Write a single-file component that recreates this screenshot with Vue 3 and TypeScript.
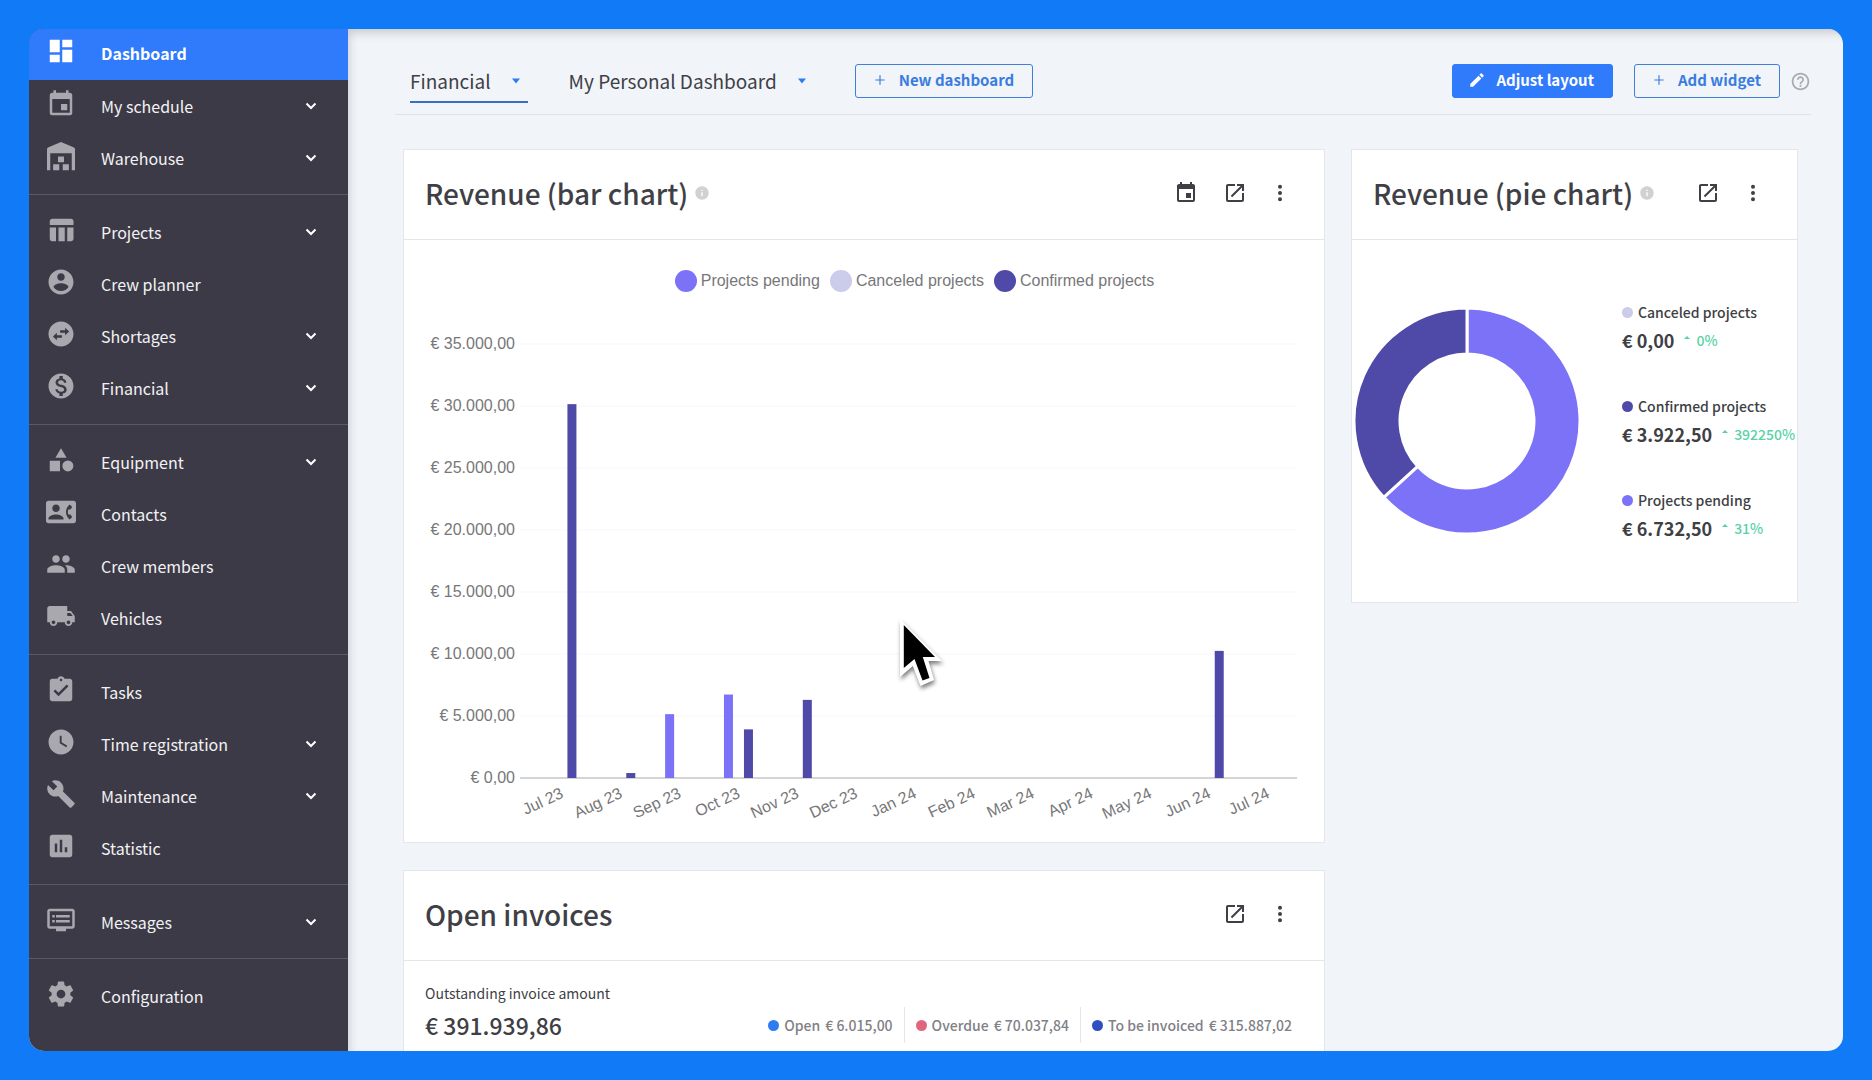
<script setup lang="ts">
interface NavItem {
  label: string
  icon: string
  expandable?: boolean
  active?: boolean
}

const icons: Record<string, string> = {
  dashboard: 'M13 3v6h8V3zM13 21h8V11h-8zM3 21h8v-6H3zM3 13h8V3H3z',
  calendar:
    'M19 19H5V8h14M16 1v2H8V1H6v2H5c-1.11 0-2 .89-2 2v14a2 2 0 0 0 2 2h14a2 2 0 0 0 2-2V5c0-1.11-.9-2-2-2h-1V1M17 12h-5v5h5z',
  warehouse:
    'M12 .8L1.600 5.200Q.8 5.600.8 6.500V23.300H3.400V9.800H20.600V23.300H23.200V6.500Q23.200 5.600 22.400 5.200zM10 12.300h4q.4 0 .4.4v3.900q0 .4-.4.4h-4q-.4 0-.4-.4v-3.900q0-.4.4-.4zM5.700 18.500h4.900v4.800H5.700zM13.400 18.500h4.900v4.800h-4.900z',
  projects:
    'M10 10h5v11h-5zM17 21h3c1.1 0 2-.9 2-2v-9h-5v11zm3-18H5c-1.100 0-2 .9-2 2v3h19V5c0-1.100-.9-2-2-2zM3 19c0 1.100.9 2 2 2h3V10H3v9z',
  person:
    'M12 2C6.480 2 2 6.480 2 12s4.480 10 10 10 10-4.480 10-10S17.520 2 12 2zm0 3c1.660 0 3 1.340 3 3s-1.340 3-3 3-3-1.340-3-3 1.340-3 3-3zm0 14.200c-2.500 0-4.710-1.280-6-3.220.03-1.990 4-3.080 6-3.080 1.990 0 5.970 1.090 6 3.080-1.290 1.940-3.500 3.220-6 3.220z',
  swap:
    'M22 12c0-5.520-4.480-10-10-10S2 6.480 2 12s4.480 10 10 10 10-4.480 10-10zM18.500 10l-3.200 3v-2h-4V9h4V7zM5.500 14l3.200-3v2h4v2h-4v2z',
  money:
    'M12 2C6.480 2 2 6.480 2 12s4.480 10 10 10 10-4.480 10-10S17.520 2 12 2zm1.410 16.090V20h-2.670v-1.930c-1.710-.36-3.160-1.460-3.270-3.400h1.960c.1 1.050.82 1.870 2.650 1.870 1.960 0 2.400-.98 2.400-1.590 0-.83-.44-1.610-2.670-2.140-2.480-.6-4.180-1.620-4.180-3.670 0-1.720 1.390-2.840 3.110-3.210V4h2.670v1.950c1.860.45 2.790 1.860 2.850 3.390H14.300c-.05-1.110-.64-1.870-2.220-1.870-1.500 0-2.400.68-2.400 1.640 0 .84.65 1.390 2.670 1.910s4.180 1.390 4.180 3.910c-.01 1.830-1.380 2.830-3.120 3.160z',
  shapes:
    'M12 2.500L7.500 10.200h9zM3 12.500h8.200v8.500H3zM17.500 12.300a4.400 4.400 0 1 0 0 8.800 4.400 4.400 0 1 0 0-8.800z',
  contact:
    'M22 3H2C.9 3 0 3.900 0 5v14c0 1.100.9 2 2 2h20c1.100 0 1.990-.9 1.990-2L24 5c0-1.100-.9-2-2-2zM8 6c1.660 0 3 1.340 3 3s-1.340 3-3 3-3-1.340-3-3 1.340-3 3-3zm6 12H2v-1c0-2 4-3.100 6-3.100s6 1.100 6 3.100v1zm3.850-4h1.640L21 16l-1.990 1.990c-1.310-.98-2.280-2.380-2.730-3.990-.18-.64-.28-1.310-.28-2s.1-1.360.28-2c.45-1.620 1.420-3.010 2.730-3.990L21 8l-1.510 2h-1.640c-.22.63-.35 1.300-.35 2s.13 1.370.35 2z',
  group:
    'M16 11c1.660 0 2.990-1.340 2.990-3S17.660 5 16 5s-3 1.340-3 3 1.340 3 3 3zm-8 0c1.660 0 2.990-1.340 2.990-3S9.660 5 8 5 5 6.340 5 8s1.340 3 3 3zm0 2c-2.330 0-7 1.170-7 3.500V19h14v-2.500c0-2.330-4.670-3.500-7-3.500zm8 0c-.29 0-.62.02-.97.05 1.160.84 1.970 1.970 1.970 3.450V19h6v-2.500c0-2.330-4.670-3.500-7-3.500z',
  truck:
    'M20 8h-3V4H3c-1.100 0-2 .9-2 2v11h2c0 1.660 1.340 3 3 3s3-1.340 3-3h6c0 1.660 1.340 3 3 3s3-1.340 3-3h2v-5l-3-4zM6 18.500c-.83 0-1.500-.67-1.500-1.500s.67-1.500 1.500-1.500 1.500.67 1.500 1.500-.67 1.500-1.500 1.500zm13.500-9l1.960 2.500H17V9.500h2.500zm-1.500 9c-.83 0-1.500-.67-1.500-1.500s.67-1.500 1.500-1.500 1.500.67 1.500 1.500-.67 1.500-1.500 1.500z',
  task:
    'M19 3h-4.180C14.400 1.840 13.300 1 12 1s-2.400.84-2.820 2H5c-1.100 0-2 .9-2 2v14c0 1.100.9 2 2 2h14c1.100 0 2-.9 2-2V5c0-1.100-.9-2-2-2zm-7 0c.55 0 1 .45 1 1s-.45 1-1 1-1-.45-1-1 .45-1 1-1zm-2 14l-4-4 1.410-1.410L10 14.170l6.590-6.590L18 9l-8 8z',
  clock:
    'M12 2C6.500 2 2 6.500 2 12s4.500 10 10 10 10-4.500 10-10S17.500 2 12 2zm4.200 14.200L11 13V7h1.500v5.200l4.500 2.700-.8 1.300z',
  wrench:
    'M22.700 19l-9.100-9.100c.9-2.300.4-5-1.500-6.900-2-2-5-2.400-7.400-1.300L9 6 6 9 1.600 4.700C.4 7.100.9 10.100 2.900 12.100c1.900 1.900 4.600 2.400 6.900 1.500l9.100 9.100c.4.4 1 .4 1.400 0l2.300-2.300c.5-.4.5-1.100.1-1.400z',
  stats:
    'M19 3H5c-1.100 0-2 .9-2 2v14c0 1.100.9 2 2 2h14c1.100 0 2-.9 2-2V5c0-1.100-.9-2-2-2zM9 17H7v-7h2v7zm4 0h-2V7h2v10zm4 0h-2v-4h2v4z',
  messages:
    'M21 3H3c-1.100 0-2 .9-2 2v12c0 1.100.9 2 2 2h5v2h8v-2h5c1.100 0 1.990-.9 1.990-2L23 5c0-1.100-.9-2-2-2zm0 14H3V5h18v12zm-2-9H8v2h11V8zm0 4H8v2h11v-2zM7 8H5v2h2V8zm0 4H5v2h2v-2z',
  cog:
    'M12 15.500A3.500 3.500 0 1 1 12 8.500a3.500 3.500 0 0 1 0 7M19.430 12.970C19.470 12.650 19.500 12.330 19.500 12S19.470 11.340 19.430 11L21.540 9.370C21.730 9.220 21.780 8.950 21.660 8.730L19.660 5.270C19.540 5.050 19.270 4.960 19.050 5.050L16.560 6.050C16.040 5.660 15.500 5.320 14.870 5.070L14.500 2.420C14.460 2.180 14.250 2 14 2H10C9.750 2 9.540 2.180 9.500 2.420L9.130 5.070C8.500 5.320 7.960 5.660 7.440 6.050L4.950 5.050C4.730 4.960 4.460 5.050 4.340 5.270L2.340 8.730C2.210 8.950 2.270 9.220 2.460 9.370L4.570 11C4.530 11.340 4.500 11.670 4.500 12S4.530 12.650 4.570 12.970L2.460 14.630C2.270 14.780 2.210 15.050 2.340 15.270L4.340 18.730C4.460 18.950 4.730 19.030 4.950 18.950L7.440 17.940C7.960 18.340 8.500 18.680 9.130 18.930L9.500 21.580C9.540 21.820 9.750 22 10 22H14C14.250 22 14.460 21.820 14.500 21.580L14.870 18.930C15.500 18.670 16.040 18.340 16.560 17.940L19.050 18.950C19.270 19.030 19.540 18.950 19.660 18.730L21.660 15.270C21.780 15.050 21.730 14.780 21.540 14.630z',
  event:
    'M17 12h-5v5h5v-5zM16 1v2H8V1H6v2H5c-1.110 0-1.990.9-1.990 2L3 19c0 1.100.89 2 2 2h14c1.100 0 2-.9 2-2V5c0-1.100-.9-2-2-2h-1V1h-2zm3 18H5V8h14v11z',
  open:
    'M19 19H5V5h7V3H5c-1.110 0-2 .9-2 2v14c0 1.100.89 2 2 2h14c1.100 0 2-.9 2-2v-7h-2v7zM14 3v2h3.590l-9.830 9.830 1.410 1.410L19 6.410V10h2V3h-7z',
  dots: 'M12 3.800a2 2 0 1 0 0 4 2 2 0 1 0 0-4zM12 10a2 2 0 1 0 0 4 2 2 0 1 0 0-4zM12 16.200a2 2 0 1 0 0 4 2 2 0 1 0 0-4z',
  pencil:
    'M3 17.250V21h3.750L17.810 9.940l-3.750-3.750L3 17.250zM20.710 7.040c.39-.39.39-1.020 0-1.410l-2.340-2.340c-.39-.39-1.020-.39-1.410 0l-1.830 1.830 3.750 3.750 1.830-1.830z',
  help:
    'M11 18h2v-2h-2v2zm1-16C6.480 2 2 6.480 2 12s4.480 10 10 10 10-4.480 10-10S17.520 2 12 2zm0 18c-4.410 0-8-3.590-8-8s3.590-8 8-8 8 3.590 8 8-3.590 8-8 8zm0-14c-2.210 0-4 1.790-4 4h2c0-1.100.9-2 2-2s2 .9 2 2c0 2-3 1.750-3 5h2c0-2.250 3-2.500 3-5 0-2.210-1.790-4-4-4z',
  info:
    'M12 2C6.480 2 2 6.480 2 12s4.480 10 10 10 10-4.480 10-10S17.520 2 12 2zm1 15h-2v-6h2v6zm0-8h-2V7h2v2z',
  plus: 'M11 4h2v7h7v2h-7v7h-2v-7H4v-2h7z',
}

const groups: NavItem[][] = [
  [
    { label: 'Dashboard', icon: 'dashboard', active: true },
    { label: 'My schedule', icon: 'calendar', expandable: true },
    { label: 'Warehouse', icon: 'warehouse', expandable: true },
  ],
  [
    { label: 'Projects', icon: 'projects', expandable: true },
    { label: 'Crew planner', icon: 'person' },
    { label: 'Shortages', icon: 'swap', expandable: true },
    { label: 'Financial', icon: 'money', expandable: true },
  ],
  [
    { label: 'Equipment', icon: 'shapes', expandable: true },
    { label: 'Contacts', icon: 'contact' },
    { label: 'Crew members', icon: 'group' },
    { label: 'Vehicles', icon: 'truck' },
  ],
  [
    { label: 'Tasks', icon: 'task' },
    { label: 'Time registration', icon: 'clock', expandable: true },
    { label: 'Maintenance', icon: 'wrench', expandable: true },
    { label: 'Statistic', icon: 'stats' },
  ],
  [{ label: 'Messages', icon: 'messages', expandable: true }],
  [{ label: 'Configuration', icon: 'cog' }],
]

const tabs = [
  { label: 'Financial', active: true },
  { label: 'My Personal Dashboard', active: false },
]

const colors = { pending: '#7b72f8', canceled: '#cbcbea', confirmed: '#4f4aa8' }

const barLegend = [
  { label: 'Projects pending', color: colors.pending },
  { label: 'Canceled projects', color: colors.canceled },
  { label: 'Confirmed projects', color: colors.confirmed },
]

// Bar chart geometry, in viewBox units
const plot = { left: 128, right: 893, top: 52, bottom: 486, max: 35000 }
const months = [
  'Jul 23', 'Aug 23', 'Sep 23', 'Oct 23', 'Nov 23', 'Dec 23', 'Jan 24',
  'Feb 24', 'Mar 24', 'Apr 24', 'May 24', 'Jun 24', 'Jul 24',
]
const step = (plot.right - plot.left) / months.length
const yOf = (v: number): number => plot.bottom - (v / plot.max) * (plot.bottom - plot.top)
const ticks = ['0,00', '5.000,00', '10.000,00', '15.000,00', '20.000,00', '25.000,00', '30.000,00', '35.000,00'].map(
  (text, i) => ({ text: `€ ${text}`, y: yOf(i * 5000) }),
)
const labels = months.map((text, i) => ({ text, x: plot.left + step * (i + 0.5) }))

const series: { month: number; kind: 'pending' | 'confirmed'; value: number }[] = [
  { month: 0, kind: 'confirmed', value: 30150 },
  { month: 1, kind: 'confirmed', value: 400 },
  { month: 2, kind: 'pending', value: 5150 },
  { month: 3, kind: 'pending', value: 6732 },
  { month: 3, kind: 'confirmed', value: 3922 },
  { month: 4, kind: 'confirmed', value: 6300 },
  { month: 11, kind: 'confirmed', value: 10250 },
]
const bars = series.map((s) => ({
  x: plot.left + step * (s.month + 0.5) + (s.kind === 'pending' ? -10 : 10) - 4,
  y: yOf(s.value),
  height: plot.bottom - yOf(s.value),
  color: colors[s.kind],
}))

// Donut slices
const point = (share: number, r: number): string => {
  const a = share * 2 * Math.PI
  return `${(112 + r * Math.sin(a)).toFixed(2)} ${(112 - r * Math.cos(a)).toFixed(2)}`
}
const slice = (from: number, to: number): string => {
  const large = to - from > 0.5 ? 1 : 0
  return `M${point(from, 113)}A113 113 0 ${large} 1 ${point(to, 113)}L${point(to, 67)}A67 67 0 ${large} 0 ${point(from, 67)}Z`
}
const pendingShare = 6732.5 / (6732.5 + 3922.5)
const slices = [
  { d: slice(0, pendingShare), color: colors.pending },
  { d: slice(pendingShare, 1), color: colors.confirmed },
]

const pieLegend = [
  { label: 'Canceled projects', amount: '€ 0,00', change: '0%', color: colors.canceled },
  { label: 'Confirmed projects', amount: '€ 3.922,50', change: '392250%', color: colors.confirmed },
  { label: 'Projects pending', amount: '€ 6.732,50', change: '31%', color: colors.pending },
]

const invoices = [
  { label: 'Open', amount: '€ 6.015,00', color: '#2f7bf0' },
  { label: 'Overdue', amount: '€ 70.037,84', color: '#e0667f' },
  { label: 'To be invoiced', amount: '€ 315.887,02', color: '#2f4fc0' },
]
</script>

<template>
  <div class="backdrop">
    <div class="window">
      <nav class="sidebar" aria-label="Main">
        <ul v-for="(group, g) in groups" :key="g" class="group">
          <li v-for="item in group" :key="item.label">
            <a href="#" class="nav-link" :class="{ active: item.active }">
              <svg class="nav-icon" viewBox="0 0 24 24" aria-hidden="true">
                <path :d="icons[item.icon]" fill-rule="evenodd" />
              </svg>
              <span class="nav-label">{{ item.label }}</span>
              <svg v-if="item.expandable" class="chevron" viewBox="0 0 12 8" aria-hidden="true">
                <path d="M1.500 1.500L6 6l4.500-4.500" />
              </svg>
            </a>
          </li>
        </ul>
      </nav>

      <main class="content">
        <header class="toolbar">
          <button v-for="tab in tabs" :key="tab.label" type="button" class="tab" :class="{ current: tab.active }">
            {{ tab.label }}
            <svg class="caret" viewBox="0 0 8 6" aria-hidden="true"><path d="M0 .5h8L4 5.500z" /></svg>
          </button>
          <button type="button" class="btn">
            <svg viewBox="0 0 24 24" aria-hidden="true"><path :d="icons.plus" /></svg>
            New dashboard
          </button>
          <div class="actions">
            <button type="button" class="btn primary">
              <svg viewBox="0 0 24 24" aria-hidden="true"><path :d="icons.pencil" /></svg>
              Adjust layout
            </button>
            <button type="button" class="btn">
              <svg viewBox="0 0 24 24" aria-hidden="true"><path :d="icons.plus" /></svg>
              Add widget
            </button>
            <button type="button" class="help" aria-label="Help">
              <svg viewBox="0 0 24 24" aria-hidden="true"><path :d="icons.help" /></svg>
            </button>
          </div>
        </header>

        <div class="board">
          <div class="column">
            <section class="card chart-card">
              <header class="card-head">
                <h2>Revenue (bar chart)</h2>
                <svg class="info" viewBox="0 0 24 24" aria-hidden="true"><path :d="icons.info" /></svg>
                <div class="tools">
                  <button type="button" aria-label="Period"><svg viewBox="0 0 24 24"><path :d="icons.event" /></svg></button>
                  <button type="button" aria-label="Open"><svg viewBox="0 0 24 24"><path :d="icons.open" /></svg></button>
                  <button type="button" class="more" aria-label="More"><svg viewBox="4 0 16 24"><path :d="icons.dots" /></svg></button>
                </div>
              </header>
              <ul class="bar-legend">
                <li v-for="entry in barLegend" :key="entry.label">
                  <i :style="{ background: entry.color }"></i>{{ entry.label }}
                </li>
              </ul>
              <svg class="bars" viewBox="0 0 920 550" role="img" aria-label="Revenue per month">
                <g v-for="tick in ticks" :key="tick.text">
                  <line class="grid" x1="116" :x2="plot.right" :y1="tick.y" :y2="tick.y" />
                  <text x="111" :y="tick.y + 5" text-anchor="end">{{ tick.text }}</text>
                </g>
                <line class="axis" x1="116" :x2="plot.right" :y1="plot.bottom" :y2="plot.bottom" />
                <rect v-for="(bar, i) in bars" :key="i" :x="bar.x" :y="bar.y" width="9" :height="bar.height" :fill="bar.color" />
                <text
                  v-for="label in labels"
                  :key="label.text"
                  text-anchor="end"
                  :transform="`translate(${label.x + 3} 505) rotate(-25)`"
                >{{ label.text }}</text>
              </svg>
              <svg class="cursor" viewBox="-4 -4 52 76" aria-hidden="true">
                <path d="M0 0L42 42H28.500L34 61 20.500 67 12.800 47 0 58z" fill="#fff" />
                <path d="M3.800 6L35 38H22.800L29.500 59 22.500 61.500 14.500 40 3.800 49z" fill="#000" />
              </svg>
            </section>

            <section class="card">
              <header class="card-head">
                <h2>Open invoices</h2>
                <div class="tools">
                  <button type="button" aria-label="Open"><svg viewBox="0 0 24 24"><path :d="icons.open" /></svg></button>
                  <button type="button" class="more" aria-label="More"><svg viewBox="4 0 16 24"><path :d="icons.dots" /></svg></button>
                </div>
              </header>
              <div class="invoice-body">
                <div>
                  <p class="caption">Outstanding invoice amount</p>
                  <p class="total">€ 391.939,86</p>
                </div>
                <ul class="invoice-legend">
                  <li v-for="entry in invoices" :key="entry.label">
                    <i :style="{ background: entry.color }"></i>
                    <span>{{ entry.label }}</span>
                    <span>{{ entry.amount }}</span>
                  </li>
                </ul>
              </div>
            </section>
          </div>

          <section class="card">
            <header class="card-head">
              <h2>Revenue (pie chart)</h2>
              <svg class="info" viewBox="0 0 24 24" aria-hidden="true"><path :d="icons.info" /></svg>
              <div class="tools">
                <button type="button" aria-label="Open"><svg viewBox="0 0 24 24"><path :d="icons.open" /></svg></button>
                <button type="button" class="more" aria-label="More"><svg viewBox="4 0 16 24"><path :d="icons.dots" /></svg></button>
              </div>
            </header>
            <div class="pie-body">
              <svg class="donut" viewBox="0 0 224 224" role="img" aria-label="Revenue by status">
                <path v-for="s in slices" :key="s.color" :d="s.d" :fill="s.color" />
              </svg>
              <ul class="pie-legend">
                <li v-for="entry in pieLegend" :key="entry.label">
                  <div class="pie-label"><i :style="{ background: entry.color }"></i>{{ entry.label }}</div>
                  <div class="pie-value">
                    <span>{{ entry.amount }}</span>
                    <svg viewBox="0 0 6 3" aria-hidden="true"><path d="M0 3L3 0l3 3z" /></svg>
                    <span class="change">{{ entry.change }}</span>
                  </div>
                </li>
              </ul>
            </div>
          </section>
        </div>
      </main>
    </div>
  </div>
</template>

<style>
body {
  margin: 0;
}
</style>

<style scoped>
* {
  box-sizing: border-box;
}
ul {
  list-style: none;
  margin: 0;
  padding: 0;
}
button {
  border: 0;
  background: none;
  padding: 0;
  font: inherit;
  color: inherit;
  cursor: pointer;
}
svg {
  display: block;
  flex: none;
  fill: currentColor;
}
.backdrop {
  height: 100vh;
  padding: 29px;
  background: #117af6;
  font-family: "Noto Sans CJK SC", "Noto Sans", sans-serif;
  color: #403f46;
}
.window {
  display: flex;
  height: 100%;
  border-radius: 15px;
  overflow: hidden;
  background: #f1f5fa;
}
.sidebar {
  flex: none;
  width: 319px;
  background: #3c3a46;
  color: #f2f2f4;
}
.group + .group {
  margin-top: 10px;
  padding-top: 11px;
  border-top: 1px solid #5b5963;
}
.nav-link {
  display: flex;
  align-items: center;
  height: 52px;
  padding: 0 31px 0 17px;
  color: inherit;
  font-size: 16px;
  line-height: 24px;
  text-decoration: none;
}
.nav-link.active {
  height: 51px;
  padding-bottom: 3px;
  background: #307afc;
  color: #fff;
  font-weight: 700;
}
.nav-icon {
  width: 30px;
  height: 30px;
  margin-bottom: 5px;
  color: #a9a8ae;
}
.active .nav-icon {
  color: #fff;
}
.nav-label {
  flex: 1;
  margin-left: 25px;
}
.chevron {
  width: 12px;
  height: 8px;
  fill: none;
  stroke: #fff;
  stroke-width: 2;
}
.content {
  flex: 1;
  min-width: 0;
  box-shadow: inset 0 14px 10px -10px #c9cbce, inset 8px 0 8px -6px #cfd1d8;
}
.toolbar {
  display: flex;
  align-items: center;
  gap: 41px;
  margin: 0 32px 34px 47px;
  padding: 30px 0 11px 15px;
  border-bottom: 1px solid #e0e3e7;
}
.tab {
  display: flex;
  align-items: center;
  gap: 21px;
  height: 44px;
  padding: 0 8px 0 0;
  border-bottom: 2px solid transparent;
  font-size: 19px;
  white-space: nowrap;
}
.tab.current {
  border-color: #3b6fc4;
}
.caret {
  width: 8px;
  height: 6px;
  margin-top: 2px;
  color: #2f7bf0;
}
.btn {
  display: flex;
  align-items: center;
  gap: 12px;
  height: 34px;
  padding: 0 18px 2px 17px;
  border: 1px solid #3f7fd8;
  border-radius: 3px;
  color: #3a7ce0;
  font-size: 15px;
  font-weight: 700;
  line-height: 24px;
  white-space: nowrap;
}
.btn svg {
  width: 14px;
  height: 14px;
}
.btn.primary {
  gap: 10px;
  padding-left: 15px;
  border-color: #307afc;
  background: #307afc;
  color: #fff;
}
.btn.primary svg {
  width: 18px;
  height: 18px;
}
.actions {
  display: flex;
  align-items: center;
  gap: 21px;
  margin-left: auto;
}
.help {
  margin: 0 0 0 -11px;
  color: #a8abb0;
}
.help svg {
  width: 21px;
  height: 21px;
}
.board {
  display: grid;
  grid-template-columns: minmax(0, 922fr) minmax(0, 447fr);
  gap: 26px;
  align-items: start;
  margin: 0 45px 0 55px;
}
.column {
  display: grid;
  gap: 27px;
}
.card {
  border: 1px solid #e3e6ea;
  background: #fff;
}
.chart-card {
  position: relative;
}
.card-head {
  display: flex;
  align-items: center;
  height: 90px;
  padding: 0 36px 4px 21px;
  border-bottom: 1px solid #e3e5e8;
}
h2 {
  margin: 0;
  font-size: 28px;
  font-weight: 500;
  line-height: 40px;
  white-space: nowrap;
}
.info {
  width: 16px;
  height: 16px;
  margin-left: 6px;
  color: #d0d1d3;
}
.tools {
  display: flex;
  gap: 25px;
  margin-left: auto;
}
.tools svg {
  width: 24px;
  height: 24px;
}
.tools .more svg {
  width: 16px;
}
.bar-legend {
  display: flex;
  justify-content: center;
  gap: 10px;
  padding: 30px 27px 0 128px;
  color: #777779;
  font-family: "Liberation Sans", Arial, sans-serif;
  font-size: 16px;
  line-height: 22px;
}
.bar-legend li {
  display: flex;
  gap: 4px;
}
.bar-legend i {
  width: 22px;
  height: 22px;
  border-radius: 50%;
}
.bars {
  width: 100%;
  font-family: "Liberation Sans", Arial, sans-serif;
  font-size: 16px;
  fill: #777779;
}
.grid {
  stroke: #f7f7f8;
}
.axis {
  stroke: #d3d4d5;
  stroke-width: 2;
}
.cursor {
  position: absolute;
  top: 465px;
  left: 492px;
  width: 52px;
  height: 76px;
  filter: drop-shadow(1px 3px 2px rgba(0, 0, 0, 0.5));
}
.pie-body {
  display: flex;
  align-items: center;
  gap: 43px;
  padding: 62px 0 62px 3px;
}
.donut {
  width: 224px;
  height: 224px;
  stroke: #fff;
  stroke-width: 3;
}
.pie-legend {
  display: grid;
  gap: 44px;
}
.pie-label {
  display: flex;
  align-items: center;
  gap: 5px;
  margin-bottom: 6px;
  font-size: 14px;
  font-weight: 500;
  line-height: 20px;
  white-space: nowrap;
}
.pie-label i,
.invoice-legend i {
  width: 11px;
  height: 11px;
  border-radius: 50%;
}
.pie-value {
  display: flex;
  align-items: center;
  gap: 8px;
  font-size: 18px;
  font-weight: 700;
  line-height: 24px;
  white-space: nowrap;
}
.pie-value svg {
  width: 6px;
  height: 3px;
  margin: 0 -2px 6px 2px;
  color: #5ad2a6;
}
.change {
  color: #5ad2a6;
  font-size: 14px;
  font-weight: 500;
}
.invoice-body {
  display: flex;
  align-items: flex-end;
  justify-content: space-between;
  padding: 21px 32px 40px 21px;
}
.caption {
  margin: 0 0 3px;
  font-size: 14px;
  line-height: 22px;
}
.total {
  margin: 0;
  font-size: 23px;
  font-weight: 500;
  line-height: 36px;
}
.invoice-legend {
  display: flex;
  color: #808186;
  font-size: 14px;
  font-weight: 500;
  line-height: 36px;
}
.invoice-legend li {
  display: flex;
  align-items: center;
  gap: 5px;
}
.invoice-legend li + li {
  margin-left: 11px;
  padding-left: 11px;
  border-left: 1px solid #e6e6e9;
}
</style>
